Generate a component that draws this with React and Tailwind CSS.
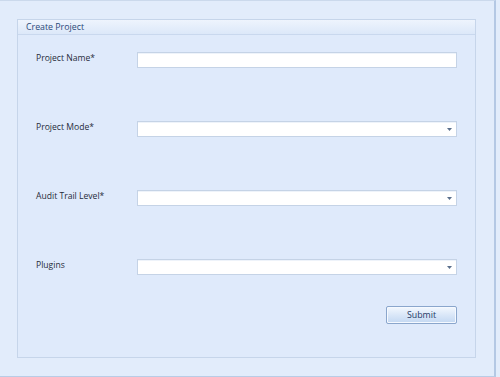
import { useState } from 'react';

const FONT = { fontFamily: '"Open Sans", "Noto Sans", Arial, sans-serif' };

const Arrow = () => (
  <svg width="5" height="3" viewBox="0 0 5 3" className="absolute right-[4px] top-[6px]">
    <path d="M0 0 H5 L2.5 3 Z" fill="#5a6f8c" />
  </svg>
);

const Field = ({ label, select, value, onChange }) => (
  <div className="flex items-center h-[16px]">
    <div className="w-[101px] text-[8.6px] text-[#1f2a3a] leading-none -mt-[3px]">{label}</div>
    <div className="relative w-[320px] h-[16px] bg-white border border-[#c5d3e6] shadow-[inset_0_1px_0_#eef3fa]">
      {select ? (
        <Arrow />
      ) : (
        <input
          value={value}
          onChange={onChange}
          className="w-full h-full outline-none px-1 text-[9px] bg-transparent"
        />
      )}
    </div>
  </div>
);

export default function App() {
  const [name, setName] = useState('');

  return (
    <div className="w-[500px] h-[377px] bg-[#e2ecfb] flex" style={FONT}>
      <div className="w-[496px] h-[377px] border-t border-b border-r-2 border-t-[#cbd9ec] border-b-[#b9cce6] border-r-[#b4c8e4] pt-[18px] pl-[17px]">
        <div className="w-[459px] h-[339px] border border-[#c6d5ea] bg-[#dfeafb] flex flex-col">
          {/* Header */}
          <div className="h-[15px] bg-gradient-to-b from-[#eef4fd] to-[#dce8f9] border-b border-[#c9d8ee] flex items-center pl-[8px]">
            <span className="text-[8.8px] text-[#2b4a7a] leading-none">Create Project</span>
          </div>

          {/* Fields */}
          <div className="flex flex-col pl-[18px] pt-[17px] gap-[53px]">
            <Field label="Project Name*" value={name} onChange={(e) => setName(e.target.value)} />
            <Field label="Project Mode*" select />
            <Field label="Audit Trail Level*" select />
            <Field label="Plugins" select />
          </div>

          {/* Actions */}
          <div className="flex justify-end pr-[18px] pt-[31px]">
            <button className="w-[71px] h-[18px] rounded-[2px] border border-[#8aa6cc] bg-gradient-to-b from-[#f3f8fe] via-[#dae7f8] to-[#c3d8f2] text-[8.8px] text-[#1e3966] leading-none shadow-[inset_0_0_0_1px_#f5f9ff]">
              Submit
            </button>
          </div>
        </div>
      </div>
    </div>
  );
}
